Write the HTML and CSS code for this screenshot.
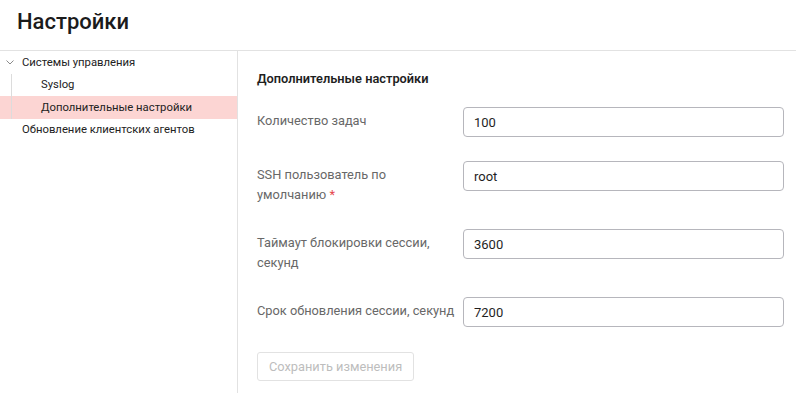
FILE: index.html
```html
<!DOCTYPE html>
<html lang="ru">

<head>
    <meta charset="UTF-8">
    <meta name="viewport" content="width=device-width, initial-scale=1.0">
    <title>Настройки</title>
    <link rel="stylesheet" href="styles.css">
</head>

<body>
    <header class="page-header">
        <h1>Настройки</h1>
    </header>
    <div class="page">
        <aside class="sidebar">
            <ul class="tree">
                <li>
                    <div class="tree-item">
                        <svg class="chevron" width="8" height="5" viewBox="0 0 8 5">
                            <polyline points="0.5,0.5 4,4 7.5,0.5" fill="none" stroke="#8a8a8a" stroke-width="1"/>
                        </svg>
                        <span>Системы управления</span>
                    </div>
                    <ul class="tree-children">
                        <li><div class="tree-item child">Syslog</div></li>
                        <li><div class="tree-item child active">Дополнительные настройки</div></li>
                    </ul>
                </li>
                <li><div class="tree-item">Обновление клиентских агентов</div></li>
            </ul>
        </aside>
        <main class="content">
            <h2>Дополнительные настройки</h2>
            <form class="settings-form">
                <div class="form-row">
                    <label class="form-label">Количество задач</label>
                    <input class="form-input" type="text" value="100">
                </div>
                <div class="form-row">
                    <label class="form-label">SSH пользователь по умолчанию<span class="required">&nbsp;*</span></label>
                    <input class="form-input" type="text" value="root">
                </div>
                <div class="form-row">
                    <label class="form-label">Таймаут блокировки сессии, секунд</label>
                    <input class="form-input" type="text" value="3600">
                </div>
                <div class="form-row">
                    <label class="form-label">Срок обновления сессии, секунд</label>
                    <input class="form-input" type="text" value="7200">
                </div>
                <button class="btn" type="button" disabled>Сохранить изменения</button>
            </form>
        </main>
    </div>
</body>

</html>
```

FILE: styles.css
```css
* {
    box-sizing: border-box;
}

body {
    margin: 0;
    font-family: Roboto, "Liberation Sans", sans-serif;
    color: #222;
    background: #fff;
}

.page-header {
    height: 51px;
    padding: 8px 17px 0;
    border-bottom: 1px solid #e2e2e2;
}

.page-header h1 {
    margin: 0;
    font-size: 22px;
    line-height: 28px;
    font-weight: 500;
    color: #1b1b1b;
}

.page {
    display: flex;
    height: calc(100vh - 51px);
}

/* дерево слева */
.sidebar {
    width: 238px;
    flex-shrink: 0;
    border-right: 1px solid #e2e2e2;
}

.tree,
.tree-children {
    list-style: none;
    margin: 0;
    padding: 0;
}

.tree-children {
    position: relative;
}

.tree-children::before {
    content: "";
    position: absolute;
    left: 11px;
    top: 0;
    bottom: 0;
    width: 1px;
    background: #dcdcdc;
}

.tree-item {
    display: flex;
    align-items: center;
    height: 22.5px;
    padding-left: 22px;
    font-size: 11.3px;
    color: #222;
    cursor: pointer;
}

.tree-item .chevron {
    margin-left: -16px;
    margin-right: 8px;
}

.tree-item.child {
    padding-left: 41px;
}

.tree-item.active {
    background: #fcd5d3;
}

/* форма */
.content {
    flex: 1;
    padding: 18px 12px 0 19px;
}

.content h2 {
    margin: 0 0 18px;
    font-size: 12.8px;
    line-height: 20px;
    font-weight: 600;
    color: #1f1f1f;
}

.form-row {
    display: flex;
    align-items: flex-start;
    margin-bottom: 24px;
}

.form-label {
    width: 206px;
    flex-shrink: 0;
    padding-top: 4px;
    font-size: 12.8px;
    line-height: 20px;
    color: #686868;
}

.required {
    color: #e5484d;
}

.form-input {
    flex: 1;
    height: 30px;
    padding: 0 10px;
    border: 1px solid #b6b6bc;
    border-radius: 4px;
    font-family: inherit;
    font-size: 13px;
    color: #1f1f1f;
    outline: none;
}

.btn {
    height: 29px;
    margin-top: 1px;
    padding: 0 11px;
    border: 1px solid #e2e2e2;
    border-radius: 3px;
    background: #fff;
    font-family: inherit;
    font-size: 12.8px;
    color: #bdbdbd;
}
```
